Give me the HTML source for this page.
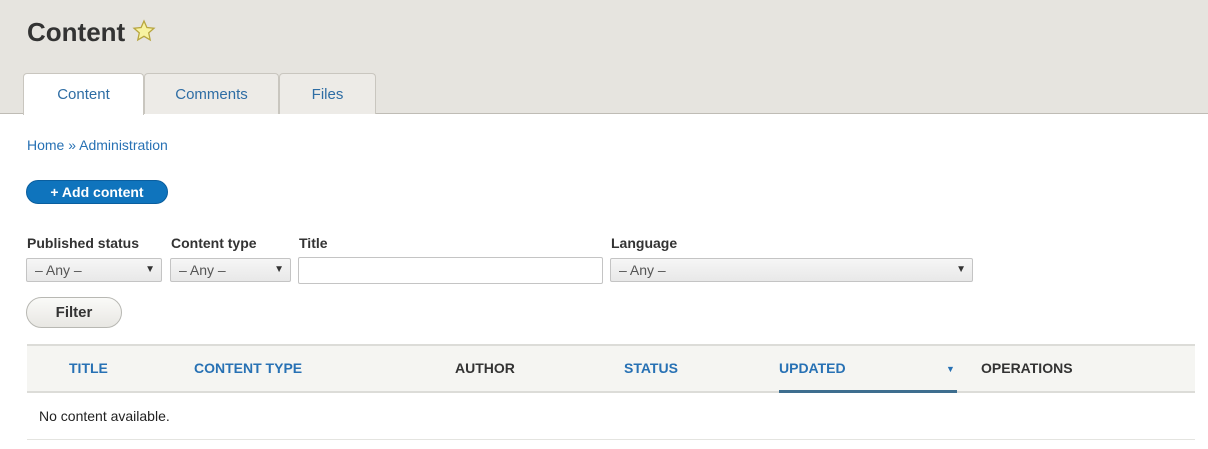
<!DOCTYPE html><html><head><style>
*{margin:0;padding:0;box-sizing:border-box}
body{width:1208px;height:449px;background:#fff;font-family:"Liberation Sans",sans-serif;position:relative;overflow:hidden;color:#222}
.hdr{position:absolute;left:0;top:0;width:1208px;height:114px;background:#e6e4df;border-bottom:1px solid #bfbcb5}
h1{position:absolute;left:27px;top:17px;font-size:26px;font-weight:bold;color:#333}
.tab{position:absolute;top:73px;height:41px;border:1px solid #c9c6bf;border-bottom:none;border-radius:4px 4px 0 0;background:#edebe7;color:#2e6da4;font-size:15px;text-align:center;line-height:42px}
a,.l{color:#2771b4}
.abs{position:absolute}
.sel{position:absolute;top:258px;height:24px;border:1px solid #c4c4c4;border-radius:2px;background:linear-gradient(#f6f6f6,#e8e8e8);font-size:14px;color:#555;padding-left:8px;line-height:22px}
.sel:after{content:"▼";position:absolute;right:6px;top:0;font-size:10px;color:#333}
.lab{position:absolute;top:235px;font-size:14px;font-weight:bold;color:#333}
.th{position:absolute;top:360px;font-size:14px;font-weight:bold;color:#2771b4}
</style></head><body>
<div class="hdr"></div>
<h1>Content <svg width="24" height="24" viewBox="0 0 24 24" style="vertical-align:-2px"><path d="M12 2l2.9 6.5 7.1.7-5.3 4.7 1.5 7-6.2-3.6-6.2 3.6 1.5-7L2 9.2l7.1-.7z" fill="#f8f3a0" stroke="#b8a640" stroke-width="1.3"/></svg></h1>
<div class="tab" style="left:23px;width:121px;background:#fff;height:42px;">Content</div>
<div class="tab" style="left:144px;width:135px">Comments</div>
<div class="tab" style="left:279px;width:97px">Files</div>
<div class="abs l" style="left:27px;top:137px;font-size:14px">Home » Administration</div>
<div class="abs" style="left:26px;top:180px;width:142px;height:24px;border-radius:12px;background:#0f74bd;border:1px solid #0a5e9e;color:#fff;font-size:14px;font-weight:bold;text-align:center;line-height:22px">+ Add content</div>
<div class="lab" style="left:27px">Published status</div>
<div class="lab" style="left:171px">Content type</div>
<div class="lab" style="left:299px">Title</div>
<div class="lab" style="left:611px">Language</div>
<div class="sel" style="left:26px;width:136px">– Any –</div>
<div class="sel" style="left:170px;width:121px">– Any –</div>
<div class="abs" style="left:298px;top:257px;width:305px;height:27px;border:1px solid #c4c4c4;border-radius:2px"></div>
<div class="sel" style="left:610px;width:363px">– Any –</div>
<div class="abs" style="left:26px;top:297px;width:96px;height:31px;border-radius:16px;border:1px solid #b8b8b3;background:linear-gradient(#fafaf8,#e8e7e3);font-size:15px;font-weight:bold;color:#333;text-align:center;line-height:29px">Filter</div>
<div class="abs" style="left:27px;top:344px;width:1168px;height:49px;background:#f5f5f2;border-top:2px solid #dcdcd8;border-bottom:2px solid #dcdcd8"></div>
<div class="abs" style="left:779px;top:390px;width:178px;height:3px;background:#3e6e8f"></div>
<div class="th" style="left:69px">TITLE</div>
<div class="th" style="left:194px">CONTENT TYPE</div>
<div class="th" style="left:455px;color:#333">AUTHOR</div>
<div class="th" style="left:624px">STATUS</div>
<div class="th" style="left:779px">UPDATED</div>
<div class="th" style="left:946px;font-size:9px;top:364px">▼</div>
<div class="th" style="left:981px;color:#333">OPERATIONS</div>
<div class="abs" style="left:39px;top:408px;font-size:14px;color:#222">No content available.</div>
<div class="abs" style="left:27px;top:439px;width:1168px;height:1px;background:#e4e4e0"></div>
</body></html>
